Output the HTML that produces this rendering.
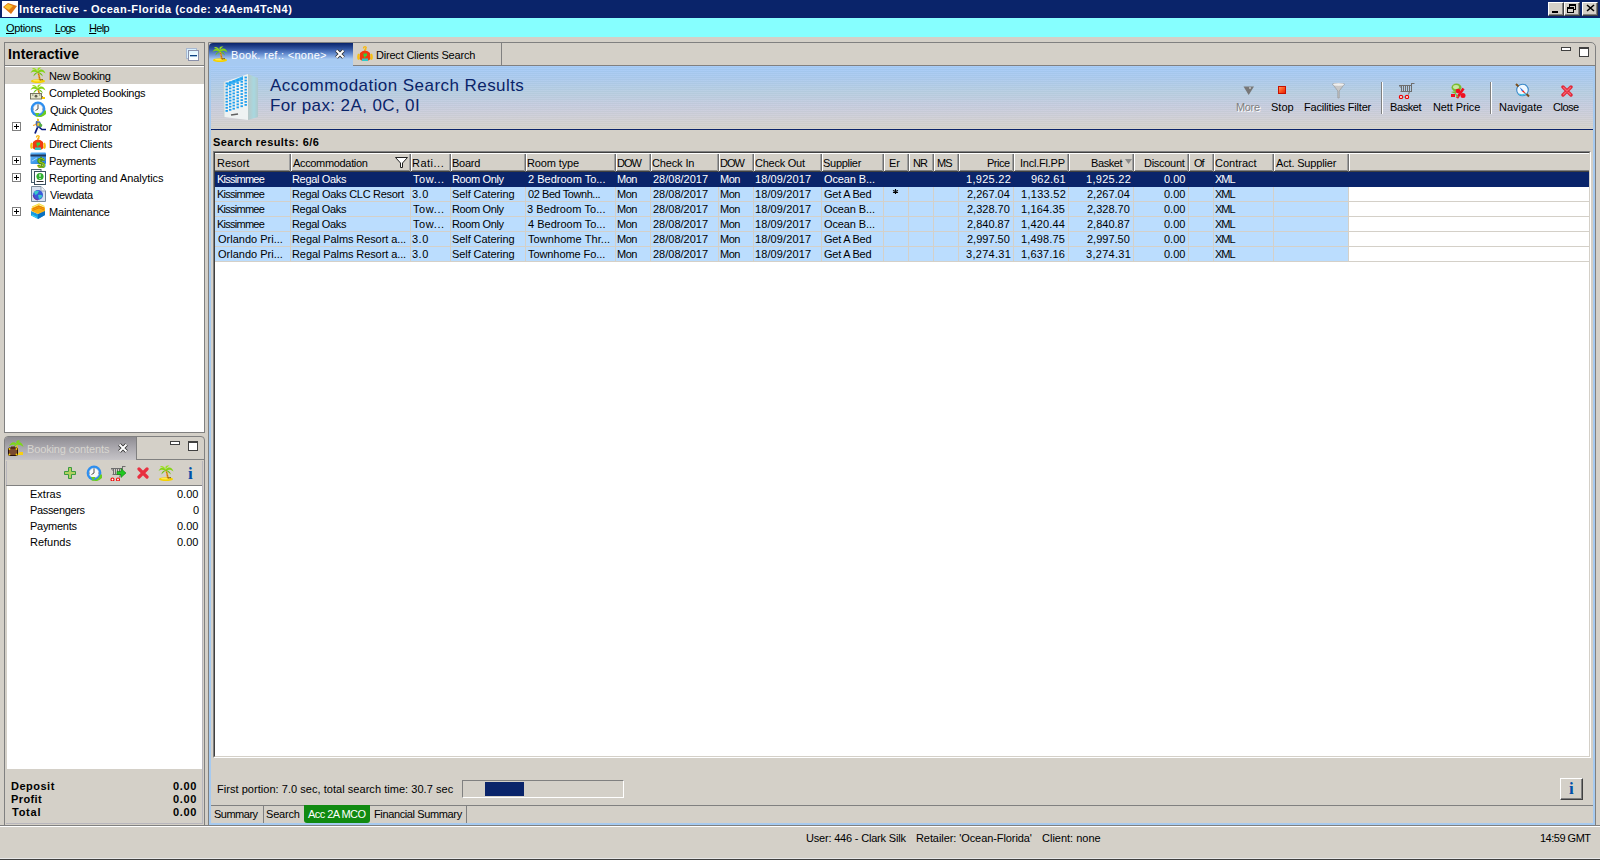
<!DOCTYPE html>
<html><head><meta charset="utf-8">
<style>
*{box-sizing:border-box;margin:0;padding:0}
html,body{width:1600px;height:860px;overflow:hidden}
body{background:#D4D0C8;font-family:"Liberation Sans",sans-serif;font-size:11px;color:#000;position:relative}
.a{position:absolute}
.t{position:absolute;white-space:nowrap;line-height:13px;letter-spacing:-0.35px}
.wb{position:absolute;top:2px;width:16px;height:14px;background:#D4D0C8;border-top:1px solid #fff;border-left:1px solid #fff;border-right:1px solid #404040;border-bottom:1px solid #404040;box-shadow:inset -1px -1px 0 #808080}
u{text-decoration:underline}
</style></head><body>
<div class="a" style="left:0;top:0;width:1600px;height:18px;background:#0A246A"></div>
<div class="a" style="left:2px;top:1px;width:16px;height:16px;background:#fff"></div>
<svg class="a" style="left:2px;top:1px;" width="16" height="16" viewBox="0 0 16 16"><path d="M1 6 L6 2 L15 5 L9 13Z" fill="#E07810"/><path d="M2 6 L6 3 L11 5 L7 9Z" fill="#F8C030"/></svg>
<div class="t" style="left:19.00px;top:3px;color:#fff;font-weight:bold;letter-spacing:0.511px">Interactive - Ocean-Florida (code: x4Aem4TcN4)</div>
<div class="wb" style="left:1548px"></div>
<div class="wb" style="left:1564px"></div>
<div class="wb" style="left:1582px"></div>
<div class="a" style="left:1552px;top:11px;width:6px;height:2px;background:#000"></div>
<div class="a" style="left:1569px;top:4px;width:7px;height:6px;border:1px solid #000;border-top-width:2px"></div>
<div class="a" style="left:1567px;top:7px;width:7px;height:6px;border:1px solid #000;border-top-width:2px;background:#D4D0C8"></div>
<svg class="a" style="left:1586px;top:4px;" width="9" height="8" viewBox="0 0 9 8"><path d="M1 1 L8 7 M8 1 L1 7" stroke="#000" stroke-width="1.6"/></svg>
<div class="a" style="left:0;top:18px;width:1600px;height:19px;background:#86FFFF"></div>
<div class="t" style="left:6.00px;top:22px;;letter-spacing:-0.333px"><u>O</u>ptions</div>
<div class="t" style="left:55.00px;top:22px;;letter-spacing:-1.000px"><u>L</u>ogs</div>
<div class="t" style="left:89.00px;top:22px;;letter-spacing:-0.667px"><u>H</u>elp</div>
<div class="a" style="left:4px;top:42px;width:201px;height:391px;border:1px solid #808080;background:#fff"></div>
<div class="a" style="left:5px;top:43px;width:199px;height:22px;background:#D4D0C8"></div>
<div class="a" style="left:5px;top:65px;width:199px;height:1px;background:#808080"></div>
<div class="t" style="left:8.00px;top:46px;font-size:14px;font-weight:bold;line-height:16px;letter-spacing:0.100px">Interactive</div>
<div class="a" style="left:186px;top:48px;width:11px;height:11px;border:1px solid #A8B8D0;background:#D8F0FF"></div>
<div class="a" style="left:188px;top:50px;width:11px;height:11px;border:1px solid #8A90AA;background:linear-gradient(#E0F6FF,#FFFFFF)"></div>
<div class="a" style="left:190px;top:55px;width:7px;height:1px;background:#0A4080;box-shadow:0 0.5px 0 #5080B0"></div>
<div class="a" style="left:5px;top:67px;width:199px;height:17px;background:#D4D0C8"></div>
<svg class="a" style="left:30px;top:67px;" width="16" height="16" viewBox="0 0 16 16"><ellipse cx="8" cy="14.2" rx="7" ry="1.9" fill="#F4D000"/><ellipse cx="7.5" cy="13.6" rx="4.5" ry="0.9" fill="#FFEA50"/><path d="M7 4.5 Q8.5 9 9 13.5 L11 13.5 Q10 8 8.3 4.5Z" fill="#E8A020"/><path d="M8.4 7.5l1 .5M8.8 10l1 .4M9.2 12l1 .4" stroke="#A05010" stroke-width="0.9"/><path d="M10 13 L13 12.6" stroke="#604000" stroke-width="0.8"/><path d="M7.8 4.5 C5 1.5 2 2.5 0.5 6 C2.5 4.5 4.5 4.2 7.8 5.5Z" fill="#84D414"/><path d="M7.8 4.5 C10.5 1.5 14 2 15.5 6.5 C13 4.5 11 4.5 7.8 5.5Z" fill="#84D414"/><path d="M7.8 4.5 C6.5 1 8.5 0 11.5 0.8 C9.5 1.5 9 2.5 7.8 5Z" fill="#9CE020"/><path d="M7.8 4.5 C5.5 0.5 3 0.5 2 2 C4 2 6 3 7.8 5Z" fill="#9CE020"/><path d="M7.5 5 C5 5.5 3.5 7.5 3.5 9.5 C5 7.5 6.5 6.5 7.8 5.5Z" fill="#6CC010"/><path d="M8 5 C10.5 5.5 12.5 7 12.8 9.5 C11 7.5 9.5 6.5 7.8 5.5Z" fill="#6CC010"/></svg>
<div class="t" style="left:49.00px;top:70px;;letter-spacing:-0.300px">New Booking</div>
<svg class="a" style="left:30px;top:84px;" width="16" height="16" viewBox="0 0 16 16"><path d="M10 13 h5 v2 h-5z" fill="#F4C800"/><path d="M7 4.5 Q8.5 9 9 13.5 L11 13.5 Q10 8 8.3 4.5Z" fill="#E8A020"/><path d="M8.4 7.5l1 .5M8.8 10l1 .4M9.2 12l1 .4" stroke="#A05010" stroke-width="0.9"/><path d="M10 13 L13 12.6" stroke="#604000" stroke-width="0.8"/><path d="M7.8 4.5 C5 1.5 2 2.5 0.5 6 C2.5 4.5 4.5 4.2 7.8 5.5Z" fill="#84D414"/><path d="M7.8 4.5 C10.5 1.5 14 2 15.5 6.5 C13 4.5 11 4.5 7.8 5.5Z" fill="#84D414"/><path d="M7.8 4.5 C6.5 1 8.5 0 11.5 0.8 C9.5 1.5 9 2.5 7.8 5Z" fill="#9CE020"/><path d="M7.8 4.5 C5.5 0.5 3 0.5 2 2 C4 2 6 3 7.8 5Z" fill="#9CE020"/><path d="M7.5 5 C5 5.5 3.5 7.5 3.5 9.5 C5 7.5 6.5 6.5 7.8 5.5Z" fill="#6CC010"/><path d="M8 5 C10.5 5.5 12.5 7 12.8 9.5 C11 7.5 9.5 6.5 7.8 5.5Z" fill="#6CC010"/><rect x="0.5" y="9.5" width="11" height="5.5" fill="#E6E6CC" stroke="#6A6A58" stroke-width="0.9"/><circle cx="6" cy="12.2" r="1.4" fill="#606050"/><path d="M2 11h1.5M9 11h1.5" stroke="#606050" stroke-width="0.8"/></svg>
<div class="t" style="left:49.00px;top:87px;;letter-spacing:-0.294px">Completed Bookings</div>
<svg class="a" style="left:30px;top:101px;" width="16" height="16" viewBox="0 0 16 16"><circle cx="8" cy="8" r="7.4" fill="#2C8EF0"/><circle cx="8" cy="8" r="4.9" fill="#FAFAFA" stroke="#9AB8D8" stroke-width="0.5"/><path d="M8 4V8L5.5 9.5" stroke="#404040" stroke-width="0.9" fill="none"/><circle cx="8" cy="3.3" r="0.5" fill="#666"/><circle cx="12.7" cy="8" r="0.5" fill="#666"/><circle cx="3.3" cy="8" r="0.5" fill="#666"/><path d="M5.5 15.5 Q12 15.5 14.5 9.5 L16 9.5 L16 13 Q12 17 6 16.5Z" fill="#6CCC20"/><path d="M5 12 L9.5 12 L7 16Z" fill="#6CCC20"/></svg>
<div class="t" style="left:50.00px;top:104px;;letter-spacing:-0.364px">Quick Quotes</div>
<svg class="a" style="left:30px;top:118px;" width="16" height="16" viewBox="0 0 16 16"><path d="M7 0.5 L9 1 L9 3 L7 3Z" fill="#F0C020"/><path d="M6 3 L10 3.5 L12 8 L10 10 L7 10 L5.5 6Z" fill="#4A6AA8"/><path d="M9 4 L12.5 7 L11 9.5 L9 8Z" fill="#58B040"/><path d="M7.5 4.5 L9.5 5 L9 8 L7 7.5Z" fill="#F0C030"/><path d="M3 7.5 L6 6.5" stroke="#F8A020" stroke-width="1.3"/><path d="M7.5 9.5 L6 13 L5 15.5" stroke="#0A1A80" stroke-width="1.8" fill="none"/><path d="M9.5 9.5 L12 11.5 L17 11.5" stroke="#0A1A80" stroke-width="1.6" fill="none"/></svg>
<div class="t" style="left:50.00px;top:121px;;letter-spacing:-0.250px">Administrator</div>
<div class="a" style="left:12px;top:122px;width:9px;height:9px;border:1px solid #808080;background:#fff"></div>
<div class="a" style="left:14px;top:126px;width:5px;height:1px;background:#000"></div>
<div class="a" style="left:16px;top:124px;width:1px;height:5px;background:#000"></div>
<svg class="a" style="left:30px;top:135px;" width="16" height="16" viewBox="0 0 16 16"><path d="M6.5 2.5 Q6.5 0.5 8.5 0.8 Q10 1.2 8.5 2.8 Q9.5 4 7 4" stroke="#F8B810" stroke-width="1.3" fill="none"/><path d="M3 7 Q5 4.5 8 4.5 Q11 4.5 13 7 L13.5 13 L11.5 14.5 L4.5 14.5 L2.5 13Z" fill="#F03A10"/><rect x="6.5" y="7.5" width="3.5" height="2.5" fill="#30D040"/><rect x="7" y="9.5" width="1.5" height="2" fill="#30D040"/><rect x="5" y="12.5" width="6" height="2.5" fill="#30C8C8"/><path d="M2 8 Q0.5 11 2 13.5" stroke="#F8C010" stroke-width="2.2" fill="none"/><path d="M14 8 Q15.5 11 14 13.5" stroke="#F8C010" stroke-width="2.2" fill="none"/></svg>
<div class="t" style="left:49.00px;top:138px;;letter-spacing:-0.154px">Direct Clients</div>
<svg class="a" style="left:30px;top:152px;" width="16" height="16" viewBox="0 0 16 16"><defs><linearGradient id="pg" x1="0" y1="0" x2="1" y2="1"><stop offset="0" stop-color="#68B8F8"/><stop offset="1" stop-color="#1C80E0"/></linearGradient></defs><rect x="0.5" y="0.5" width="15.5" height="11.5" rx="1" fill="url(#pg)"/><rect x="0.5" y="2.5" width="15.5" height="2" fill="#203860"/><path d="M2 9 L7 6" stroke="#B8E0FF" stroke-width="0.8"/><text x="11.5" y="15.5" font-family="Liberation Sans" font-weight="bold" font-size="14" fill="#9CD820" stroke="#4A8000" stroke-width="0.6" text-anchor="middle">$</text></svg>
<div class="t" style="left:49.00px;top:155px;;letter-spacing:-0.286px">Payments</div>
<div class="a" style="left:12px;top:156px;width:9px;height:9px;border:1px solid #808080;background:#fff"></div>
<div class="a" style="left:14px;top:160px;width:5px;height:1px;background:#000"></div>
<div class="a" style="left:16px;top:158px;width:1px;height:5px;background:#000"></div>
<svg class="a" style="left:30px;top:169px;" width="16" height="16" viewBox="0 0 16 16"><rect x="1.5" y="0.5" width="9.5" height="13" fill="#F4F8F8" stroke="#4A6070" stroke-width="1"/><rect x="4.5" y="2.5" width="11" height="13" fill="#fff" stroke="#3A5060" stroke-width="1"/><circle cx="10" cy="7.5" r="3.6" fill="#30B030"/><path d="M10 5.2v2.6M10 9v0.9" stroke="#fff" stroke-width="1.2"/><path d="M6.5 12.5h7" stroke="#303030" stroke-width="1"/></svg>
<div class="t" style="left:49.00px;top:172px;;letter-spacing:-0.045px">Reporting and Analytics</div>
<div class="a" style="left:12px;top:173px;width:9px;height:9px;border:1px solid #808080;background:#fff"></div>
<div class="a" style="left:14px;top:177px;width:5px;height:1px;background:#000"></div>
<div class="a" style="left:16px;top:175px;width:1px;height:5px;background:#000"></div>
<svg class="a" style="left:30px;top:186px;" width="16" height="16" viewBox="0 0 16 16"><path d="M1.5 0.5 H11 L15.5 5 V15.5 H1.5Z" fill="#D8E2F0" stroke="#7A8A9A" stroke-width="1"/><path d="M11 0.5 V5 H15.5" fill="#F0F4F8" stroke="#8A9AAA" stroke-width="0.8"/><circle cx="8" cy="9" r="5" fill="#3A58D8"/><path d="M4 6 Q6 4 9 5 Q8 8 5.5 9Z M8 9 Q11 8 12.5 10 Q11 13 9 13Z" fill="#38C8C8"/><path d="M3.2 9 Q4 13.5 8 14" stroke="#6A30A0" stroke-width="1.2" fill="none"/></svg>
<div class="t" style="left:50.00px;top:189px;;letter-spacing:-0.286px">Viewdata</div>
<svg class="a" style="left:30px;top:203px;" width="16" height="16" viewBox="0 0 16 16"><path d="M1 8 L8 11 L15 7.5 L15 12 L8 16 L1 12.5Z" fill="#1A9AE0"/><path d="M8 11 L15 7.5 L15 12 L8 16Z" fill="#0A70C0"/><path d="M2 12 L7 14.5" stroke="#40E0F0" stroke-width="1"/><path d="M1.5 5 L8.5 2 L15 4.5 L15 8 L8 11 L1.5 8Z" fill="#F8B010"/><path d="M2 4 L9 1 L14.5 3.5" stroke="#F8E040" stroke-width="1.2" fill="none"/><path d="M2.5 6 L9 3.2 L14 5.2 M2.5 7.5 L9 4.8 L14 6.8" stroke="#E07000" stroke-width="0.8" fill="none"/></svg>
<div class="t" style="left:49.00px;top:206px;;letter-spacing:-0.200px">Maintenance</div>
<div class="a" style="left:12px;top:207px;width:9px;height:9px;border:1px solid #808080;background:#fff"></div>
<div class="a" style="left:14px;top:211px;width:5px;height:1px;background:#000"></div>
<div class="a" style="left:16px;top:209px;width:1px;height:5px;background:#000"></div>
<div class="a" style="left:4px;top:436px;width:201px;height:390px;border:1px solid #808080;border-top-left-radius:4px;border-top-right-radius:4px;background:#D4D0C8"></div>
<div class="a" style="left:5px;top:437px;width:131px;height:23px;border-top-left-radius:3px;background:linear-gradient(#8E8C92,#A6A4AA 40%,#C6C4C8)"></div>
<div class="a" style="left:136px;top:437px;width:1px;height:23px;background:#808080"></div>
<div class="a" style="left:136px;top:459px;width:69px;height:1px;background:#808080"></div>
<svg class="a" style="left:8px;top:440px;" width="16" height="16" viewBox="0 0 16 16"><path d="M9 4 Q11 9 10.5 15 L9 15 Q9 9 8 4Z" fill="#F0C020"/><path d="M9 15h6v-3h-3z" fill="#F8D010"/><path d="M8.5 4 C6 1 3 2 1 6 C3 4.5 6 4.5 8.5 5Z M8.5 4 C11 1 14 2 15.5 7 C13 5 11 4.5 8.5 5Z M8.5 4 C7.5 0.5 10 -0.5 12.5 1 C10.5 1.5 10 2.5 8.5 5Z M8 4.5 C6 5.5 4.5 7 4.5 9 C6 7 7 6 8.5 5.2Z" fill="#7CD818"/><rect x="0.5" y="8" width="9" height="7.5" rx="1" fill="#7A4A30" stroke="#2A1008" stroke-width="1"/><rect x="3" y="6.5" width="4" height="2" fill="#5A2A18"/><circle cx="1.5" cy="9" r="0.9" fill="#F8D000"/><circle cx="8.5" cy="9" r="0.9" fill="#F8D000"/><circle cx="1.5" cy="14.5" r="0.9" fill="#F8D000"/><circle cx="8.5" cy="14.5" r="0.9" fill="#F8D000"/></svg>
<div class="t" style="left:27.00px;top:443px;color:#D8D6D0;letter-spacing:-0.133px">Booking contents</div>
<svg class="a" style="left:118px;top:443px;" width="10" height="10" viewBox="0 0 10 10"><path d="M1.5 1.5 L8.5 8.5 M8.5 1.5 L1.5 8.5" stroke="#303030" stroke-width="3.8"/><path d="M1.5 1.5 L8.5 8.5 M8.5 1.5 L1.5 8.5" stroke="#fff" stroke-width="2"/></svg>
<div class="a" style="left:170px;top:441px;width:10px;height:4px;border:1px solid #404040;background:#fff"></div>
<div class="a" style="left:188px;top:441px;width:10px;height:10px;border:1px solid #404040;border-top-width:2px;background:#fff"></div>
<div class="a" style="left:6px;top:461px;width:197px;height:25px;background:#D4D0C8;border-left:1px solid #B8B6BC"></div>
<div class="a" style="left:6px;top:485px;width:197px;height:1px;background:#808080"></div>
<svg class="a" style="left:64px;top:467px;" width="12" height="12" viewBox="0 0 12 12"><path d="M4.5 0.5h3v4h4v3h-4v4h-3v-4h-4v-3h4z" fill="#B0D060" stroke="#3A9A40" stroke-width="1"/></svg>
<svg class="a" style="left:86px;top:465px;" width="16" height="16" viewBox="0 0 16 16"><circle cx="8" cy="8" r="7.4" fill="#2C8EF0"/><circle cx="8" cy="8" r="4.9" fill="#FAFAFA" stroke="#9AB8D8" stroke-width="0.5"/><path d="M8 4V8L5.5 9.5" stroke="#404040" stroke-width="0.9" fill="none"/><circle cx="8" cy="3.3" r="0.5" fill="#666"/><circle cx="12.7" cy="8" r="0.5" fill="#666"/><circle cx="3.3" cy="8" r="0.5" fill="#666"/><path d="M5.5 15.5 Q12 15.5 14.5 9.5 L16 9.5 L16 13 Q12 17 6 16.5Z" fill="#6CCC20"/><path d="M5 12 L9.5 12 L7 16Z" fill="#6CCC20"/></svg>
<svg class="a" style="left:110px;top:465px;" width="16" height="16" viewBox="0 0 16 16"><path d="M1 3.5 H13 M2.5 9.5 H12 M12.5 1 V9.5 M12.5 1.5 H15.5 M3.5 3.5 V9.5 M5.5 3.5 V9.5 M7.5 3.5 V9.5 M9.5 3.5 V9.5 M11.5 3.5 V9.5 M1.5 3.5 L2.5 5.5 M10.5 9.5 L9.5 12.5" stroke="#6E6E6E" stroke-width="1" fill="none"/><circle cx="2.5" cy="14.5" r="1.5" fill="#fff" stroke="#F00000" stroke-width="1.1"/><circle cx="8" cy="14.5" r="1.5" fill="#fff" stroke="#F00000" stroke-width="1.1"/><path d="M7 6.5h4V3.5l5 4.5-5 4.5V9.5H7z" fill="#20C820" stroke="#108010" stroke-width="0.6"/></svg>
<svg class="a" style="left:137px;top:467px;" width="12" height="12" viewBox="0 0 12 12"><path d="M2 2 L10 10 M10 2 L2 10" stroke="#E83040" stroke-width="3.2" stroke-linecap="round"/></svg>
<svg class="a" style="left:158px;top:465px;" width="16" height="16" viewBox="0 0 16 16"><ellipse cx="8" cy="14.2" rx="7" ry="1.9" fill="#F4D000"/><ellipse cx="7.5" cy="13.6" rx="4.5" ry="0.9" fill="#FFEA50"/><path d="M7 4.5 Q8.5 9 9 13.5 L11 13.5 Q10 8 8.3 4.5Z" fill="#E8A020"/><path d="M8.4 7.5l1 .5M8.8 10l1 .4M9.2 12l1 .4" stroke="#A05010" stroke-width="0.9"/><path d="M10 13 L13 12.6" stroke="#604000" stroke-width="0.8"/><path d="M7.8 4.5 C5 1.5 2 2.5 0.5 6 C2.5 4.5 4.5 4.2 7.8 5.5Z" fill="#84D414"/><path d="M7.8 4.5 C10.5 1.5 14 2 15.5 6.5 C13 4.5 11 4.5 7.8 5.5Z" fill="#84D414"/><path d="M7.8 4.5 C6.5 1 8.5 0 11.5 0.8 C9.5 1.5 9 2.5 7.8 5Z" fill="#9CE020"/><path d="M7.8 4.5 C5.5 0.5 3 0.5 2 2 C4 2 6 3 7.8 5Z" fill="#9CE020"/><path d="M7.5 5 C5 5.5 3.5 7.5 3.5 9.5 C5 7.5 6.5 6.5 7.8 5.5Z" fill="#6CC010"/><path d="M8 5 C10.5 5.5 12.5 7 12.8 9.5 C11 7.5 9.5 6.5 7.8 5.5Z" fill="#6CC010"/></svg>
<div class="t" style="left:188px;top:465px;font-family:'Liberation Serif';font-weight:bold;font-size:17px;color:#0050A8;letter-spacing:0;line-height:18px">i</div>
<div class="a" style="left:7px;top:486px;width:195px;height:283px;background:#fff"></div>
<div class="t" style="left:30.00px;top:488px;;letter-spacing:0.000px">Extras</div>
<div class="t" style="left:177.00px;top:488px;;letter-spacing:0.000px">0.00</div>
<div class="t" style="left:30.00px;top:504px;;letter-spacing:-0.333px">Passengers</div>
<div class="t" style="left:193.00px;top:504px;;letter-spacing:0.000px">0</div>
<div class="t" style="left:30.00px;top:520px;;letter-spacing:-0.286px">Payments</div>
<div class="t" style="left:177.00px;top:520px;;letter-spacing:0.000px">0.00</div>
<div class="t" style="left:30.00px;top:536px;;letter-spacing:0.000px">Refunds</div>
<div class="t" style="left:177.00px;top:536px;;letter-spacing:0.000px">0.00</div>
<div class="t" style="left:11.00px;top:780px;font-weight:bold;letter-spacing:0.500px">Deposit</div>
<div class="t" style="left:173.00px;top:780px;font-weight:bold;letter-spacing:0.667px">0.00</div>
<div class="t" style="left:11.00px;top:793px;font-weight:bold;letter-spacing:0.400px">Profit</div>
<div class="t" style="left:173.00px;top:793px;font-weight:bold;letter-spacing:0.667px">0.00</div>
<div class="t" style="left:12.00px;top:806px;font-weight:bold;letter-spacing:0.750px">Total</div>
<div class="t" style="left:173.00px;top:806px;font-weight:bold;letter-spacing:0.667px">0.00</div>
<div class="a" style="left:6px;top:823px;width:197px;height:1px;background:#B8B6BC"></div>
<div class="a" style="left:202px;top:461px;width:1px;height:363px;background:#B8B6BC"></div>
<div class="a" style="left:208px;top:42px;width:1388px;height:784px;border:1px solid #808080;border-top-right-radius:5px"></div>
<div class="a" style="left:209px;top:65px;width:2px;height:760px;background:#A6CAF0"></div>
<div class="a" style="left:1593px;top:65px;width:2px;height:760px;background:#A6CAF0"></div>
<div class="a" style="left:209px;top:823px;width:1386px;height:2px;background:#A6CAF0"></div>
<div class="a" style="left:353px;top:43px;width:149px;height:22px;background:#D4D0C8;border-right:1px solid #808080"></div>
<div class="a" style="left:209px;top:65px;width:1386px;height:1px;background:#808080"></div>
<div class="a" style="left:209px;top:43px;width:144px;height:23px;border-top-left-radius:4px;background:linear-gradient(#0A246A 0px,#2A4C98 5px,#5A82C8 10px,#98BCEC 15px,#A6CAF2 16px,#A6CAF2 23px)"></div>
<svg class="a" style="left:212px;top:46px;" width="16" height="16" viewBox="0 0 16 16"><ellipse cx="8" cy="14.2" rx="7" ry="1.9" fill="#F4D000"/><ellipse cx="7.5" cy="13.6" rx="4.5" ry="0.9" fill="#FFEA50"/><path d="M7 4.5 Q8.5 9 9 13.5 L11 13.5 Q10 8 8.3 4.5Z" fill="#E8A020"/><path d="M8.4 7.5l1 .5M8.8 10l1 .4M9.2 12l1 .4" stroke="#A05010" stroke-width="0.9"/><path d="M10 13 L13 12.6" stroke="#604000" stroke-width="0.8"/><path d="M7.8 4.5 C5 1.5 2 2.5 0.5 6 C2.5 4.5 4.5 4.2 7.8 5.5Z" fill="#84D414"/><path d="M7.8 4.5 C10.5 1.5 14 2 15.5 6.5 C13 4.5 11 4.5 7.8 5.5Z" fill="#84D414"/><path d="M7.8 4.5 C6.5 1 8.5 0 11.5 0.8 C9.5 1.5 9 2.5 7.8 5Z" fill="#9CE020"/><path d="M7.8 4.5 C5.5 0.5 3 0.5 2 2 C4 2 6 3 7.8 5Z" fill="#9CE020"/><path d="M7.5 5 C5 5.5 3.5 7.5 3.5 9.5 C5 7.5 6.5 6.5 7.8 5.5Z" fill="#6CC010"/><path d="M8 5 C10.5 5.5 12.5 7 12.8 9.5 C11 7.5 9.5 6.5 7.8 5.5Z" fill="#6CC010"/></svg>
<div class="t" style="left:231.00px;top:49px;color:#fff;letter-spacing:0.294px">Book. ref.: &lt;none&gt;</div>
<svg class="a" style="left:335px;top:49px;" width="10" height="10" viewBox="0 0 10 10"><path d="M1.5 1.5 L8.5 8.5 M8.5 1.5 L1.5 8.5" stroke="#303030" stroke-width="3.8"/><path d="M1.5 1.5 L8.5 8.5 M8.5 1.5 L1.5 8.5" stroke="#fff" stroke-width="2"/></svg>
<svg class="a" style="left:357px;top:46px;" width="16" height="16" viewBox="0 0 16 16"><path d="M6.5 2.5 Q6.5 0.5 8.5 0.8 Q10 1.2 8.5 2.8 Q9.5 4 7 4" stroke="#F8B810" stroke-width="1.3" fill="none"/><path d="M3 7 Q5 4.5 8 4.5 Q11 4.5 13 7 L13.5 13 L11.5 14.5 L4.5 14.5 L2.5 13Z" fill="#F03A10"/><rect x="6.5" y="7.5" width="3.5" height="2.5" fill="#30D040"/><rect x="7" y="9.5" width="1.5" height="2" fill="#30D040"/><rect x="5" y="12.5" width="6" height="2.5" fill="#30C8C8"/><path d="M2 8 Q0.5 11 2 13.5" stroke="#F8C010" stroke-width="2.2" fill="none"/><path d="M14 8 Q15.5 11 14 13.5" stroke="#F8C010" stroke-width="2.2" fill="none"/></svg>
<div class="t" style="left:376.00px;top:49px;;letter-spacing:-0.200px">Direct Clients Search</div>
<div class="a" style="left:1561px;top:47px;width:10px;height:4px;border:1px solid #404040;background:#fff"></div>
<div class="a" style="left:1579px;top:47px;width:10px;height:10px;border:1px solid #404040;border-top-width:2px;background:#fff"></div>
<div class="a" style="left:211px;top:66px;width:1382px;height:63px;background:repeating-linear-gradient(rgba(255,255,255,0.05) 0 1px,rgba(60,110,60,0.035) 1px 2px),linear-gradient(#A4CAF8,#ACCAEE 20%,#B8CEE2 42%,#C6CCE0 62%,#CFCFD8 80%,#D6D3CC)"></div>
<div class="a" style="left:211px;top:129px;width:1382px;height:1px;background:#0A246A"></div>
<svg class="a" style="left:222px;top:72px;" width="38" height="50" viewBox="0 0 38 50"><defs><linearGradient id="rf" x1="0" x2="1"><stop offset="0" stop-color="#B8C8C8"/><stop offset="0.6" stop-color="#A8D8E0"/><stop offset="1" stop-color="#B0C8CC"/></linearGradient></defs><path d="M2 10 L26 2 L26 48 L2 45Z" fill="#EEF2F2"/><path d="M26 2 L36 6 L36 45 L26 48Z" fill="url(#rf)"/><path d="M5 11 L21 4 L21 8 L5 14Z" fill="#3CB4F6"/><rect x="3.5" y="10.5" width="2.4" height="1.8" fill="#1E9EEE"/><rect x="3.5" y="13.6" width="2.4" height="1.8" fill="#1E9EEE"/><rect x="3.5" y="16.6" width="2.4" height="1.8" fill="#1E9EEE"/><rect x="3.5" y="19.7" width="2.4" height="1.8" fill="#1E9EEE"/><rect x="3.5" y="22.7" width="2.4" height="1.8" fill="#1E9EEE"/><rect x="3.5" y="25.8" width="2.4" height="1.8" fill="#1E9EEE"/><rect x="3.5" y="28.8" width="2.4" height="1.8" fill="#1E9EEE"/><rect x="3.5" y="31.9" width="2.4" height="1.8" fill="#1E9EEE"/><rect x="3.5" y="34.9" width="2.4" height="1.8" fill="#1E9EEE"/><rect x="3.5" y="38.0" width="2.4" height="1.8" fill="#1E9EEE"/><rect x="7.0" y="9.4" width="2.4" height="1.8" fill="#1E9EEE"/><rect x="7.0" y="12.5" width="2.4" height="1.8" fill="#1E9EEE"/><rect x="7.0" y="15.5" width="2.4" height="1.8" fill="#1E9EEE"/><rect x="7.0" y="18.6" width="2.4" height="1.8" fill="#1E9EEE"/><rect x="7.0" y="21.6" width="2.4" height="1.8" fill="#1E9EEE"/><rect x="7.0" y="24.7" width="2.4" height="1.8" fill="#1E9EEE"/><rect x="7.0" y="27.7" width="2.4" height="1.8" fill="#1E9EEE"/><rect x="7.0" y="30.8" width="2.4" height="1.8" fill="#1E9EEE"/><rect x="7.0" y="33.8" width="2.4" height="1.8" fill="#1E9EEE"/><rect x="7.0" y="36.9" width="2.4" height="1.8" fill="#1E9EEE"/><rect x="10.5" y="8.3" width="2.4" height="1.8" fill="#1E9EEE"/><rect x="10.5" y="11.4" width="2.4" height="1.8" fill="#1E9EEE"/><rect x="10.5" y="14.4" width="2.4" height="1.8" fill="#1E9EEE"/><rect x="10.5" y="17.5" width="2.4" height="1.8" fill="#1E9EEE"/><rect x="10.5" y="20.5" width="2.4" height="1.8" fill="#1E9EEE"/><rect x="10.5" y="23.6" width="2.4" height="1.8" fill="#1E9EEE"/><rect x="10.5" y="26.6" width="2.4" height="1.8" fill="#1E9EEE"/><rect x="10.5" y="29.7" width="2.4" height="1.8" fill="#1E9EEE"/><rect x="10.5" y="32.7" width="2.4" height="1.8" fill="#1E9EEE"/><rect x="10.5" y="35.8" width="2.4" height="1.8" fill="#1E9EEE"/><rect x="14.5" y="7.1" width="2.4" height="1.8" fill="#1E9EEE"/><rect x="14.5" y="10.1" width="2.4" height="1.8" fill="#1E9EEE"/><rect x="14.5" y="13.2" width="2.4" height="1.8" fill="#1E9EEE"/><rect x="14.5" y="16.2" width="2.4" height="1.8" fill="#1E9EEE"/><rect x="14.5" y="19.3" width="2.4" height="1.8" fill="#1E9EEE"/><rect x="14.5" y="22.3" width="2.4" height="1.8" fill="#1E9EEE"/><rect x="14.5" y="25.4" width="2.4" height="1.8" fill="#1E9EEE"/><rect x="14.5" y="28.4" width="2.4" height="1.8" fill="#1E9EEE"/><rect x="14.5" y="31.5" width="2.4" height="1.8" fill="#1E9EEE"/><rect x="14.5" y="34.5" width="2.4" height="1.8" fill="#1E9EEE"/><rect x="18.5" y="5.8" width="2.4" height="1.8" fill="#1E9EEE"/><rect x="18.5" y="8.9" width="2.4" height="1.8" fill="#1E9EEE"/><rect x="18.5" y="11.9" width="2.4" height="1.8" fill="#1E9EEE"/><rect x="18.5" y="15.0" width="2.4" height="1.8" fill="#1E9EEE"/><rect x="18.5" y="18.0" width="2.4" height="1.8" fill="#1E9EEE"/><rect x="18.5" y="21.1" width="2.4" height="1.8" fill="#1E9EEE"/><rect x="18.5" y="24.1" width="2.4" height="1.8" fill="#1E9EEE"/><rect x="18.5" y="27.2" width="2.4" height="1.8" fill="#1E9EEE"/><rect x="18.5" y="30.2" width="2.4" height="1.8" fill="#1E9EEE"/><rect x="18.5" y="33.3" width="2.4" height="1.8" fill="#1E9EEE"/><rect x="22.5" y="4.6" width="2.4" height="1.8" fill="#1E9EEE"/><rect x="22.5" y="7.6" width="2.4" height="1.8" fill="#1E9EEE"/><rect x="22.5" y="10.7" width="2.4" height="1.8" fill="#1E9EEE"/><rect x="22.5" y="13.7" width="2.4" height="1.8" fill="#1E9EEE"/><rect x="22.5" y="16.8" width="2.4" height="1.8" fill="#1E9EEE"/><rect x="22.5" y="19.8" width="2.4" height="1.8" fill="#1E9EEE"/><rect x="22.5" y="22.9" width="2.4" height="1.8" fill="#1E9EEE"/><rect x="22.5" y="25.9" width="2.4" height="1.8" fill="#1E9EEE"/><rect x="22.5" y="29.0" width="2.4" height="1.8" fill="#1E9EEE"/><rect x="22.5" y="32.0" width="2.4" height="1.8" fill="#1E9EEE"/><path d="M2 10 L2 45" stroke="#C8D0D0" stroke-width="1"/><path d="M9 43 L16 42" stroke="#606060" stroke-width="1.6"/></svg>
<div class="t" style="left:270.00px;top:76px;font-size:17px;line-height:20px;color:#0A246A;letter-spacing:0.444px">Accommodation Search Results</div>
<div class="t" style="left:270.00px;top:96px;font-size:17px;line-height:20px;color:#0A246A;letter-spacing:0.389px">For pax: 2A, 0C, 0I</div>
<div class="t" style="left:1236.00px;top:101px;color:#808080;text-shadow:1px 1px 0 #fff;letter-spacing:-0.333px">More</div>
<svg class="a" style="left:1243px;top:86px;" width="12" height="10" viewBox="0 0 12 10"><path d="M0.5 0.5 H11 L5.7 9Z" fill="#777"/><circle cx="7" cy="2" r="0.8" fill="#fff"/></svg>
<div class="t" style="left:1271.00px;top:101px;color:#000;letter-spacing:0.000px">Stop</div>
<svg class="a" style="left:1278px;top:86px;" width="8" height="8" viewBox="0 0 8 8"><defs><linearGradient id="sg" x1="0" y1="0" x2="1" y2="1"><stop offset="0" stop-color="#FFA060"/><stop offset="0.6" stop-color="#F84818"/><stop offset="1" stop-color="#E02008"/></linearGradient></defs><rect x="0.5" y="0.5" width="7" height="7" fill="url(#sg)" stroke="#C81000" stroke-width="1"/></svg>
<div class="t" style="left:1304.00px;top:101px;color:#000;letter-spacing:-0.188px">Facilities Filter</div>
<svg class="a" style="left:1332px;top:83px;" width="13" height="16" viewBox="0 0 13 16"><path d="M0.5 1 Q6.5 -1 12.5 1 L7.2 8 V15 H5.8 V8Z" fill="#C8C8C8" stroke="#909090" stroke-width="0.6"/><ellipse cx="6.5" cy="1.5" rx="5.5" ry="1.2" fill="#F0F0F0"/></svg>
<div class="a" style="left:1381px;top:82px;width:2px;height:32px;background:#808080;border-right:1px solid #fff"></div>
<div class="t" style="left:1390.00px;top:101px;color:#000;letter-spacing:-0.400px">Basket</div>
<svg class="a" style="left:1398px;top:82px;" width="17" height="17" viewBox="0 0 17 17"><path d="M1 3.5 H14 M2.5 9.5 H14 M13.5 1 V9.5 M13.5 1.5 H16.5 M3.5 3.5 V9.5 M5.5 3.5 V9.5 M7.5 3.5 V9.5 M9.5 3.5 V9.5 M11.5 3.5 V9.5 M1.5 3.5 L2.5 5.5 M11.5 9.5 L10.5 12.5" stroke="#6E6E6E" stroke-width="1" fill="none"/><circle cx="3" cy="15" r="1.6" fill="#fff" stroke="#F00000" stroke-width="1.2"/><circle cx="9" cy="15" r="1.6" fill="#fff" stroke="#F00000" stroke-width="1.2"/><path d="M4.6 15h2.8" stroke="#5a8a8a" stroke-width="0.8"/></svg>
<div class="t" style="left:1433.00px;top:101px;color:#000;letter-spacing:-0.111px">Nett Price</div>
<svg class="a" style="left:1450px;top:82px;" width="17" height="17" viewBox="0 0 17 17"><ellipse cx="6.5" cy="5.5" rx="5" ry="4" fill="#7CBC30"/><ellipse cx="6" cy="5" rx="3" ry="2" fill="#C8E8A0"/><path d="M1 10 L6 9 L6 12Z" fill="#7CBC30"/><rect x="1" y="12" width="4" height="3" fill="#F01020"/><circle cx="8" cy="9" r="2.3" fill="#F01020"/><circle cx="13" cy="13.5" r="2.5" fill="#F01020"/><path d="M13.5 6.5 L7 16" stroke="#F01020" stroke-width="2.6"/><path d="M5.5 12 L8 15" stroke="#7CBC30" stroke-width="1.2"/></svg>
<div class="a" style="left:1490px;top:82px;width:2px;height:32px;background:#808080;border-right:1px solid #fff"></div>
<div class="t" style="left:1499.00px;top:101px;color:#000;letter-spacing:0.000px">Navigate</div>
<svg class="a" style="left:1513px;top:82px;" width="17" height="17" viewBox="0 0 17 17"><circle cx="9.5" cy="8" r="5.8" fill="#F0F8FF" stroke="#3A88C8" stroke-width="1.1"/><path d="M13 11 A5.8 5.8 0 0 1 6 12" stroke="#40C8E8" stroke-width="1.2" fill="none"/><path d="M6.5 5 L10.5 8.5 L9 9.5Z" fill="#2A70D8"/><path d="M10.5 8.5 L13 12 L9 9.5Z" fill="#F02010"/><path d="M3 2 L5.5 4.5 M13.5 12 L16 14.5" stroke="#7A5020" stroke-width="2"/></svg>
<div class="t" style="left:1553.00px;top:101px;color:#000;letter-spacing:-0.500px">Close</div>
<svg class="a" style="left:1561px;top:85px;" width="12" height="12" viewBox="0 0 12 12"><path d="M2 2 L10 10 M10 2 L2 10" stroke="#E02838" stroke-width="3.4" stroke-linecap="round"/><path d="M2.5 2.5 L9.5 9.5 M9.5 2.5 L2.5 9.5" stroke="#F86070" stroke-width="1.2" stroke-linecap="round"/></svg>
<div class="t" style="left:213.00px;top:136px;font-weight:bold;letter-spacing:0.444px">Search results: 6/6</div>
<div class="a" style="left:213px;top:151px;width:1378px;height:607px;border-top:1px solid #808080;border-left:1px solid #808080;border-right:1px solid #fff;border-bottom:1px solid #fff"></div>
<div class="a" style="left:214px;top:152px;width:1376px;height:605px;border-top:1px solid #404040;border-left:1px solid #404040;border-right:1px solid #D4D0C8;border-bottom:1px solid #D4D0C8;background:#fff"></div>
<div class="a" style="left:215px;top:153px;width:1374px;height:19px;background:#D4D0C8;border-top:1px solid #fff;border-bottom:1px solid #404040;box-shadow:inset 0 -1px 0 #808080"></div>
<div class="a" style="left:289px;top:154px;width:1px;height:17px;background:#A0A0A0"></div>
<div class="a" style="left:290px;top:154px;width:1px;height:18px;background:#707070"></div>
<div class="a" style="left:291px;top:154px;width:1px;height:17px;background:#fff"></div>
<div class="t" style="left:217.00px;top:157px;;letter-spacing:0.000px">Resort</div>
<div class="a" style="left:409px;top:154px;width:1px;height:17px;background:#A0A0A0"></div>
<div class="a" style="left:410px;top:154px;width:1px;height:18px;background:#707070"></div>
<div class="a" style="left:411px;top:154px;width:1px;height:17px;background:#fff"></div>
<div class="t" style="left:293.00px;top:157px;;letter-spacing:-0.333px">Accommodation</div>
<div class="a" style="left:449px;top:154px;width:1px;height:17px;background:#A0A0A0"></div>
<div class="a" style="left:450px;top:154px;width:1px;height:18px;background:#707070"></div>
<div class="a" style="left:451px;top:154px;width:1px;height:17px;background:#fff"></div>
<div class="t" style="left:412.00px;top:157px;;letter-spacing:0.500px">Rati...</div>
<div class="a" style="left:524px;top:154px;width:1px;height:17px;background:#A0A0A0"></div>
<div class="a" style="left:525px;top:154px;width:1px;height:18px;background:#707070"></div>
<div class="a" style="left:526px;top:154px;width:1px;height:17px;background:#fff"></div>
<div class="t" style="left:452.00px;top:157px;;letter-spacing:-0.250px">Board</div>
<div class="a" style="left:614px;top:154px;width:1px;height:17px;background:#A0A0A0"></div>
<div class="a" style="left:615px;top:154px;width:1px;height:18px;background:#707070"></div>
<div class="a" style="left:616px;top:154px;width:1px;height:17px;background:#fff"></div>
<div class="t" style="left:527.00px;top:157px;;letter-spacing:-0.125px">Room type</div>
<div class="a" style="left:649px;top:154px;width:1px;height:17px;background:#A0A0A0"></div>
<div class="a" style="left:650px;top:154px;width:1px;height:18px;background:#707070"></div>
<div class="a" style="left:651px;top:154px;width:1px;height:17px;background:#fff"></div>
<div class="t" style="left:617.00px;top:157px;;letter-spacing:-1.000px">DOW</div>
<div class="a" style="left:717px;top:154px;width:1px;height:17px;background:#A0A0A0"></div>
<div class="a" style="left:718px;top:154px;width:1px;height:18px;background:#707070"></div>
<div class="a" style="left:719px;top:154px;width:1px;height:17px;background:#fff"></div>
<div class="t" style="left:652.00px;top:157px;;letter-spacing:-0.143px">Check In</div>
<div class="a" style="left:752px;top:154px;width:1px;height:17px;background:#A0A0A0"></div>
<div class="a" style="left:753px;top:154px;width:1px;height:18px;background:#707070"></div>
<div class="a" style="left:754px;top:154px;width:1px;height:17px;background:#fff"></div>
<div class="t" style="left:720.00px;top:157px;;letter-spacing:-1.000px">DOW</div>
<div class="a" style="left:820px;top:154px;width:1px;height:17px;background:#A0A0A0"></div>
<div class="a" style="left:821px;top:154px;width:1px;height:18px;background:#707070"></div>
<div class="a" style="left:822px;top:154px;width:1px;height:17px;background:#fff"></div>
<div class="t" style="left:755.00px;top:157px;;letter-spacing:-0.250px">Check Out</div>
<div class="a" style="left:882px;top:154px;width:1px;height:17px;background:#A0A0A0"></div>
<div class="a" style="left:883px;top:154px;width:1px;height:18px;background:#707070"></div>
<div class="a" style="left:884px;top:154px;width:1px;height:17px;background:#fff"></div>
<div class="t" style="left:823.00px;top:157px;;letter-spacing:-0.286px">Supplier</div>
<div class="a" style="left:907px;top:154px;width:1px;height:17px;background:#A0A0A0"></div>
<div class="a" style="left:908px;top:154px;width:1px;height:18px;background:#707070"></div>
<div class="a" style="left:909px;top:154px;width:1px;height:17px;background:#fff"></div>
<div class="t" style="left:889.00px;top:157px;;letter-spacing:0.000px">Er</div>
<div class="a" style="left:932px;top:154px;width:1px;height:17px;background:#A0A0A0"></div>
<div class="a" style="left:933px;top:154px;width:1px;height:18px;background:#707070"></div>
<div class="a" style="left:934px;top:154px;width:1px;height:17px;background:#fff"></div>
<div class="t" style="left:913.00px;top:157px;;letter-spacing:-1.000px">NR</div>
<div class="a" style="left:957px;top:154px;width:1px;height:17px;background:#A0A0A0"></div>
<div class="a" style="left:958px;top:154px;width:1px;height:18px;background:#707070"></div>
<div class="a" style="left:959px;top:154px;width:1px;height:17px;background:#fff"></div>
<div class="t" style="left:937.00px;top:157px;;letter-spacing:-1.000px">MS</div>
<div class="a" style="left:1012px;top:154px;width:1px;height:17px;background:#A0A0A0"></div>
<div class="a" style="left:1013px;top:154px;width:1px;height:18px;background:#707070"></div>
<div class="a" style="left:1014px;top:154px;width:1px;height:17px;background:#fff"></div>
<div class="t" style="left:987.00px;top:157px;;letter-spacing:-0.500px">Price</div>
<div class="a" style="left:1067px;top:154px;width:1px;height:17px;background:#A0A0A0"></div>
<div class="a" style="left:1068px;top:154px;width:1px;height:18px;background:#707070"></div>
<div class="a" style="left:1069px;top:154px;width:1px;height:17px;background:#fff"></div>
<div class="t" style="left:1020.00px;top:157px;;letter-spacing:-0.222px">Incl.Fl.PP</div>
<div class="a" style="left:1132px;top:154px;width:1px;height:17px;background:#A0A0A0"></div>
<div class="a" style="left:1133px;top:154px;width:1px;height:18px;background:#707070"></div>
<div class="a" style="left:1134px;top:154px;width:1px;height:17px;background:#fff"></div>
<div class="t" style="left:1091.00px;top:157px;;letter-spacing:-0.400px">Basket</div>
<div class="a" style="left:1187px;top:154px;width:1px;height:17px;background:#A0A0A0"></div>
<div class="a" style="left:1188px;top:154px;width:1px;height:18px;background:#707070"></div>
<div class="a" style="left:1189px;top:154px;width:1px;height:17px;background:#fff"></div>
<div class="t" style="left:1144.00px;top:157px;;letter-spacing:-0.286px">Discount</div>
<div class="a" style="left:1212px;top:154px;width:1px;height:17px;background:#A0A0A0"></div>
<div class="a" style="left:1213px;top:154px;width:1px;height:18px;background:#707070"></div>
<div class="a" style="left:1214px;top:154px;width:1px;height:17px;background:#fff"></div>
<div class="t" style="left:1194.00px;top:157px;;letter-spacing:-1.000px">Of</div>
<div class="a" style="left:1272px;top:154px;width:1px;height:17px;background:#A0A0A0"></div>
<div class="a" style="left:1273px;top:154px;width:1px;height:18px;background:#707070"></div>
<div class="a" style="left:1274px;top:154px;width:1px;height:17px;background:#fff"></div>
<div class="t" style="left:1215.00px;top:157px;;letter-spacing:0.000px">Contract</div>
<div class="a" style="left:1347px;top:154px;width:1px;height:17px;background:#A0A0A0"></div>
<div class="a" style="left:1348px;top:154px;width:1px;height:18px;background:#707070"></div>
<div class="a" style="left:1349px;top:154px;width:1px;height:17px;background:#fff"></div>
<div class="t" style="left:1276.00px;top:157px;;letter-spacing:-0.167px">Act. Supplier</div>
<svg class="a" style="left:395px;top:157px;" width="13" height="11" viewBox="0 0 13 11"><path d="M0.5 0.5 H12.5 L7.5 6 V10.5 H5.5 V6Z" fill="#fff" stroke="#202020" stroke-width="1"/></svg>
<svg class="a" style="left:1125px;top:159px;" width="7" height="5" viewBox="0 0 7 5"><path d="M0 0 H7 L3.5 5Z" fill="#8A8A8A"/></svg>
<div class="a" style="left:215px;top:172px;width:1374px;height:15px;background:#0A246A"></div>
<div class="t" style="left:217.00px;top:173px;color:#fff;letter-spacing:-0.750px">Kissimmee</div>
<div class="t" style="left:292.00px;top:173px;color:#fff;letter-spacing:-0.333px">Regal Oaks</div>
<div class="t" style="left:413.00px;top:173px;color:#fff;letter-spacing:0.600px">Tow...</div>
<div class="t" style="left:452.00px;top:173px;color:#fff;letter-spacing:-0.375px">Room Only</div>
<div class="t" style="left:528.00px;top:173px;color:#fff;letter-spacing:0.000px">2 Bedroom To...</div>
<div class="t" style="left:617.00px;top:173px;color:#fff;letter-spacing:-0.500px">Mon</div>
<div class="t" style="left:653.00px;top:173px;color:#fff;letter-spacing:0.000px">28/08/2017</div>
<div class="t" style="left:720.00px;top:173px;color:#fff;letter-spacing:-0.500px">Mon</div>
<div class="t" style="left:755.00px;top:173px;color:#fff;letter-spacing:0.111px">18/09/2017</div>
<div class="t" style="left:824.00px;top:173px;color:#fff;letter-spacing:-0.111px">Ocean B...</div>
<div class="t" style="left:966.00px;top:173px;color:#fff;letter-spacing:0.286px">1,925.22</div>
<div class="t" style="left:1031.00px;top:173px;color:#fff;letter-spacing:0.200px">962.61</div>
<div class="t" style="left:1086.00px;top:173px;color:#fff;letter-spacing:0.286px">1,925.22</div>
<div class="t" style="left:1164.00px;top:173px;color:#fff;letter-spacing:0.000px">0.00</div>
<div class="t" style="left:1215.00px;top:173px;color:#fff;letter-spacing:-1.000px">XML</div>
<div class="a" style="left:215px;top:187px;width:1133px;height:14px;background:#BBDDFE"></div>
<div class="a" style="left:215px;top:201px;width:1374px;height:1px;background:#D4D0C8"></div>
<div class="a" style="left:290px;top:187px;width:1px;height:15px;background:#D4D0C8"></div>
<div class="a" style="left:410px;top:187px;width:1px;height:15px;background:#D4D0C8"></div>
<div class="a" style="left:450px;top:187px;width:1px;height:15px;background:#D4D0C8"></div>
<div class="a" style="left:525px;top:187px;width:1px;height:15px;background:#D4D0C8"></div>
<div class="a" style="left:615px;top:187px;width:1px;height:15px;background:#D4D0C8"></div>
<div class="a" style="left:650px;top:187px;width:1px;height:15px;background:#D4D0C8"></div>
<div class="a" style="left:718px;top:187px;width:1px;height:15px;background:#D4D0C8"></div>
<div class="a" style="left:753px;top:187px;width:1px;height:15px;background:#D4D0C8"></div>
<div class="a" style="left:821px;top:187px;width:1px;height:15px;background:#D4D0C8"></div>
<div class="a" style="left:883px;top:187px;width:1px;height:15px;background:#D4D0C8"></div>
<div class="a" style="left:908px;top:187px;width:1px;height:15px;background:#D4D0C8"></div>
<div class="a" style="left:933px;top:187px;width:1px;height:15px;background:#D4D0C8"></div>
<div class="a" style="left:958px;top:187px;width:1px;height:15px;background:#D4D0C8"></div>
<div class="a" style="left:1013px;top:187px;width:1px;height:15px;background:#D4D0C8"></div>
<div class="a" style="left:1068px;top:187px;width:1px;height:15px;background:#D4D0C8"></div>
<div class="a" style="left:1133px;top:187px;width:1px;height:15px;background:#D4D0C8"></div>
<div class="a" style="left:1188px;top:187px;width:1px;height:15px;background:#D4D0C8"></div>
<div class="a" style="left:1213px;top:187px;width:1px;height:15px;background:#D4D0C8"></div>
<div class="a" style="left:1273px;top:187px;width:1px;height:15px;background:#D4D0C8"></div>
<div class="a" style="left:1348px;top:187px;width:1px;height:15px;background:#D4D0C8"></div>
<div class="t" style="left:217.00px;top:188px;color:#000;letter-spacing:-0.750px">Kissimmee</div>
<div class="t" style="left:292.00px;top:188px;color:#000;letter-spacing:-0.300px">Regal Oaks CLC Resort</div>
<div class="t" style="left:412.00px;top:188px;color:#000;letter-spacing:0.500px">3.0</div>
<div class="t" style="left:452.00px;top:188px;color:#000;letter-spacing:-0.083px">Self Catering</div>
<div class="t" style="left:528.00px;top:188px;color:#000;letter-spacing:-0.429px">02 Bed Townh...</div>
<div class="t" style="left:617.00px;top:188px;color:#000;letter-spacing:-0.500px">Mon</div>
<div class="t" style="left:653.00px;top:188px;color:#000;letter-spacing:0.000px">28/08/2017</div>
<div class="t" style="left:720.00px;top:188px;color:#000;letter-spacing:-0.500px">Mon</div>
<div class="t" style="left:755.00px;top:188px;color:#000;letter-spacing:0.111px">18/09/2017</div>
<div class="t" style="left:824.00px;top:188px;color:#000;letter-spacing:-0.250px">Get A Bed</div>
<svg class="a" style="left:892px;top:188px;" width="7" height="7" viewBox="0 0 7 7"><path d="M3.5 1V6 M1 2.5 L6 4.5 M1 4.5 L6 2.5" stroke="#000" stroke-width="1.1" fill="none"/></svg>
<div class="t" style="left:967.00px;top:188px;color:#000;letter-spacing:0.000px">2,267.04</div>
<div class="t" style="left:1021.00px;top:188px;color:#000;letter-spacing:0.286px">1,133.52</div>
<div class="t" style="left:1087.00px;top:188px;color:#000;letter-spacing:0.000px">2,267.04</div>
<div class="t" style="left:1164.00px;top:188px;color:#000;letter-spacing:0.000px">0.00</div>
<div class="t" style="left:1215.00px;top:188px;color:#000;letter-spacing:-1.000px">XML</div>
<div class="a" style="left:215px;top:202px;width:1133px;height:14px;background:#BBDDFE"></div>
<div class="a" style="left:215px;top:216px;width:1374px;height:1px;background:#D4D0C8"></div>
<div class="a" style="left:290px;top:202px;width:1px;height:15px;background:#D4D0C8"></div>
<div class="a" style="left:410px;top:202px;width:1px;height:15px;background:#D4D0C8"></div>
<div class="a" style="left:450px;top:202px;width:1px;height:15px;background:#D4D0C8"></div>
<div class="a" style="left:525px;top:202px;width:1px;height:15px;background:#D4D0C8"></div>
<div class="a" style="left:615px;top:202px;width:1px;height:15px;background:#D4D0C8"></div>
<div class="a" style="left:650px;top:202px;width:1px;height:15px;background:#D4D0C8"></div>
<div class="a" style="left:718px;top:202px;width:1px;height:15px;background:#D4D0C8"></div>
<div class="a" style="left:753px;top:202px;width:1px;height:15px;background:#D4D0C8"></div>
<div class="a" style="left:821px;top:202px;width:1px;height:15px;background:#D4D0C8"></div>
<div class="a" style="left:883px;top:202px;width:1px;height:15px;background:#D4D0C8"></div>
<div class="a" style="left:908px;top:202px;width:1px;height:15px;background:#D4D0C8"></div>
<div class="a" style="left:933px;top:202px;width:1px;height:15px;background:#D4D0C8"></div>
<div class="a" style="left:958px;top:202px;width:1px;height:15px;background:#D4D0C8"></div>
<div class="a" style="left:1013px;top:202px;width:1px;height:15px;background:#D4D0C8"></div>
<div class="a" style="left:1068px;top:202px;width:1px;height:15px;background:#D4D0C8"></div>
<div class="a" style="left:1133px;top:202px;width:1px;height:15px;background:#D4D0C8"></div>
<div class="a" style="left:1188px;top:202px;width:1px;height:15px;background:#D4D0C8"></div>
<div class="a" style="left:1213px;top:202px;width:1px;height:15px;background:#D4D0C8"></div>
<div class="a" style="left:1273px;top:202px;width:1px;height:15px;background:#D4D0C8"></div>
<div class="a" style="left:1348px;top:202px;width:1px;height:15px;background:#D4D0C8"></div>
<div class="t" style="left:217.00px;top:203px;color:#000;letter-spacing:-0.750px">Kissimmee</div>
<div class="t" style="left:292.00px;top:203px;color:#000;letter-spacing:-0.333px">Regal Oaks</div>
<div class="t" style="left:413.00px;top:203px;color:#000;letter-spacing:0.600px">Tow...</div>
<div class="t" style="left:452.00px;top:203px;color:#000;letter-spacing:-0.375px">Room Only</div>
<div class="t" style="left:527.00px;top:203px;color:#000;letter-spacing:0.071px">3 Bedroom To...</div>
<div class="t" style="left:617.00px;top:203px;color:#000;letter-spacing:-0.500px">Mon</div>
<div class="t" style="left:653.00px;top:203px;color:#000;letter-spacing:0.000px">28/08/2017</div>
<div class="t" style="left:720.00px;top:203px;color:#000;letter-spacing:-0.500px">Mon</div>
<div class="t" style="left:755.00px;top:203px;color:#000;letter-spacing:0.111px">18/09/2017</div>
<div class="t" style="left:824.00px;top:203px;color:#000;letter-spacing:-0.111px">Ocean B...</div>
<div class="t" style="left:967.00px;top:203px;color:#000;letter-spacing:0.000px">2,328.70</div>
<div class="t" style="left:1021.00px;top:203px;color:#000;letter-spacing:0.143px">1,164.35</div>
<div class="t" style="left:1087.00px;top:203px;color:#000;letter-spacing:0.000px">2,328.70</div>
<div class="t" style="left:1164.00px;top:203px;color:#000;letter-spacing:0.000px">0.00</div>
<div class="t" style="left:1215.00px;top:203px;color:#000;letter-spacing:-1.000px">XML</div>
<div class="a" style="left:215px;top:217px;width:1133px;height:14px;background:#BBDDFE"></div>
<div class="a" style="left:215px;top:231px;width:1374px;height:1px;background:#D4D0C8"></div>
<div class="a" style="left:290px;top:217px;width:1px;height:15px;background:#D4D0C8"></div>
<div class="a" style="left:410px;top:217px;width:1px;height:15px;background:#D4D0C8"></div>
<div class="a" style="left:450px;top:217px;width:1px;height:15px;background:#D4D0C8"></div>
<div class="a" style="left:525px;top:217px;width:1px;height:15px;background:#D4D0C8"></div>
<div class="a" style="left:615px;top:217px;width:1px;height:15px;background:#D4D0C8"></div>
<div class="a" style="left:650px;top:217px;width:1px;height:15px;background:#D4D0C8"></div>
<div class="a" style="left:718px;top:217px;width:1px;height:15px;background:#D4D0C8"></div>
<div class="a" style="left:753px;top:217px;width:1px;height:15px;background:#D4D0C8"></div>
<div class="a" style="left:821px;top:217px;width:1px;height:15px;background:#D4D0C8"></div>
<div class="a" style="left:883px;top:217px;width:1px;height:15px;background:#D4D0C8"></div>
<div class="a" style="left:908px;top:217px;width:1px;height:15px;background:#D4D0C8"></div>
<div class="a" style="left:933px;top:217px;width:1px;height:15px;background:#D4D0C8"></div>
<div class="a" style="left:958px;top:217px;width:1px;height:15px;background:#D4D0C8"></div>
<div class="a" style="left:1013px;top:217px;width:1px;height:15px;background:#D4D0C8"></div>
<div class="a" style="left:1068px;top:217px;width:1px;height:15px;background:#D4D0C8"></div>
<div class="a" style="left:1133px;top:217px;width:1px;height:15px;background:#D4D0C8"></div>
<div class="a" style="left:1188px;top:217px;width:1px;height:15px;background:#D4D0C8"></div>
<div class="a" style="left:1213px;top:217px;width:1px;height:15px;background:#D4D0C8"></div>
<div class="a" style="left:1273px;top:217px;width:1px;height:15px;background:#D4D0C8"></div>
<div class="a" style="left:1348px;top:217px;width:1px;height:15px;background:#D4D0C8"></div>
<div class="t" style="left:217.00px;top:218px;color:#000;letter-spacing:-0.750px">Kissimmee</div>
<div class="t" style="left:292.00px;top:218px;color:#000;letter-spacing:-0.333px">Regal Oaks</div>
<div class="t" style="left:413.00px;top:218px;color:#000;letter-spacing:0.600px">Tow...</div>
<div class="t" style="left:452.00px;top:218px;color:#000;letter-spacing:-0.375px">Room Only</div>
<div class="t" style="left:528.00px;top:218px;color:#000;letter-spacing:0.000px">4 Bedroom To...</div>
<div class="t" style="left:617.00px;top:218px;color:#000;letter-spacing:-0.500px">Mon</div>
<div class="t" style="left:653.00px;top:218px;color:#000;letter-spacing:0.000px">28/08/2017</div>
<div class="t" style="left:720.00px;top:218px;color:#000;letter-spacing:-0.500px">Mon</div>
<div class="t" style="left:755.00px;top:218px;color:#000;letter-spacing:0.111px">18/09/2017</div>
<div class="t" style="left:824.00px;top:218px;color:#000;letter-spacing:-0.111px">Ocean B...</div>
<div class="t" style="left:967.00px;top:218px;color:#000;letter-spacing:0.000px">2,840.87</div>
<div class="t" style="left:1021.00px;top:218px;color:#000;letter-spacing:0.143px">1,420.44</div>
<div class="t" style="left:1087.00px;top:218px;color:#000;letter-spacing:0.000px">2,840.87</div>
<div class="t" style="left:1164.00px;top:218px;color:#000;letter-spacing:0.000px">0.00</div>
<div class="t" style="left:1215.00px;top:218px;color:#000;letter-spacing:-1.000px">XML</div>
<div class="a" style="left:215px;top:232px;width:1133px;height:14px;background:#BBDDFE"></div>
<div class="a" style="left:215px;top:246px;width:1374px;height:1px;background:#D4D0C8"></div>
<div class="a" style="left:290px;top:232px;width:1px;height:15px;background:#D4D0C8"></div>
<div class="a" style="left:410px;top:232px;width:1px;height:15px;background:#D4D0C8"></div>
<div class="a" style="left:450px;top:232px;width:1px;height:15px;background:#D4D0C8"></div>
<div class="a" style="left:525px;top:232px;width:1px;height:15px;background:#D4D0C8"></div>
<div class="a" style="left:615px;top:232px;width:1px;height:15px;background:#D4D0C8"></div>
<div class="a" style="left:650px;top:232px;width:1px;height:15px;background:#D4D0C8"></div>
<div class="a" style="left:718px;top:232px;width:1px;height:15px;background:#D4D0C8"></div>
<div class="a" style="left:753px;top:232px;width:1px;height:15px;background:#D4D0C8"></div>
<div class="a" style="left:821px;top:232px;width:1px;height:15px;background:#D4D0C8"></div>
<div class="a" style="left:883px;top:232px;width:1px;height:15px;background:#D4D0C8"></div>
<div class="a" style="left:908px;top:232px;width:1px;height:15px;background:#D4D0C8"></div>
<div class="a" style="left:933px;top:232px;width:1px;height:15px;background:#D4D0C8"></div>
<div class="a" style="left:958px;top:232px;width:1px;height:15px;background:#D4D0C8"></div>
<div class="a" style="left:1013px;top:232px;width:1px;height:15px;background:#D4D0C8"></div>
<div class="a" style="left:1068px;top:232px;width:1px;height:15px;background:#D4D0C8"></div>
<div class="a" style="left:1133px;top:232px;width:1px;height:15px;background:#D4D0C8"></div>
<div class="a" style="left:1188px;top:232px;width:1px;height:15px;background:#D4D0C8"></div>
<div class="a" style="left:1213px;top:232px;width:1px;height:15px;background:#D4D0C8"></div>
<div class="a" style="left:1273px;top:232px;width:1px;height:15px;background:#D4D0C8"></div>
<div class="a" style="left:1348px;top:232px;width:1px;height:15px;background:#D4D0C8"></div>
<div class="t" style="left:218.00px;top:233px;color:#000;letter-spacing:0.000px">Orlando Pri...</div>
<div class="t" style="left:292.00px;top:233px;color:#000;letter-spacing:-0.091px">Regal Palms Resort a...</div>
<div class="t" style="left:412.00px;top:233px;color:#000;letter-spacing:0.500px">3.0</div>
<div class="t" style="left:452.00px;top:233px;color:#000;letter-spacing:-0.083px">Self Catering</div>
<div class="t" style="left:528.00px;top:233px;color:#000;letter-spacing:0.071px">Townhome Thr...</div>
<div class="t" style="left:617.00px;top:233px;color:#000;letter-spacing:-0.500px">Mon</div>
<div class="t" style="left:653.00px;top:233px;color:#000;letter-spacing:0.000px">28/08/2017</div>
<div class="t" style="left:720.00px;top:233px;color:#000;letter-spacing:-0.500px">Mon</div>
<div class="t" style="left:755.00px;top:233px;color:#000;letter-spacing:0.111px">18/09/2017</div>
<div class="t" style="left:824.00px;top:233px;color:#000;letter-spacing:-0.250px">Get A Bed</div>
<div class="t" style="left:967.00px;top:233px;color:#000;letter-spacing:0.000px">2,997.50</div>
<div class="t" style="left:1021.00px;top:233px;color:#000;letter-spacing:0.143px">1,498.75</div>
<div class="t" style="left:1087.00px;top:233px;color:#000;letter-spacing:0.000px">2,997.50</div>
<div class="t" style="left:1164.00px;top:233px;color:#000;letter-spacing:0.000px">0.00</div>
<div class="t" style="left:1215.00px;top:233px;color:#000;letter-spacing:-1.000px">XML</div>
<div class="a" style="left:215px;top:247px;width:1133px;height:14px;background:#BBDDFE"></div>
<div class="a" style="left:215px;top:261px;width:1374px;height:1px;background:#D4D0C8"></div>
<div class="a" style="left:290px;top:247px;width:1px;height:15px;background:#D4D0C8"></div>
<div class="a" style="left:410px;top:247px;width:1px;height:15px;background:#D4D0C8"></div>
<div class="a" style="left:450px;top:247px;width:1px;height:15px;background:#D4D0C8"></div>
<div class="a" style="left:525px;top:247px;width:1px;height:15px;background:#D4D0C8"></div>
<div class="a" style="left:615px;top:247px;width:1px;height:15px;background:#D4D0C8"></div>
<div class="a" style="left:650px;top:247px;width:1px;height:15px;background:#D4D0C8"></div>
<div class="a" style="left:718px;top:247px;width:1px;height:15px;background:#D4D0C8"></div>
<div class="a" style="left:753px;top:247px;width:1px;height:15px;background:#D4D0C8"></div>
<div class="a" style="left:821px;top:247px;width:1px;height:15px;background:#D4D0C8"></div>
<div class="a" style="left:883px;top:247px;width:1px;height:15px;background:#D4D0C8"></div>
<div class="a" style="left:908px;top:247px;width:1px;height:15px;background:#D4D0C8"></div>
<div class="a" style="left:933px;top:247px;width:1px;height:15px;background:#D4D0C8"></div>
<div class="a" style="left:958px;top:247px;width:1px;height:15px;background:#D4D0C8"></div>
<div class="a" style="left:1013px;top:247px;width:1px;height:15px;background:#D4D0C8"></div>
<div class="a" style="left:1068px;top:247px;width:1px;height:15px;background:#D4D0C8"></div>
<div class="a" style="left:1133px;top:247px;width:1px;height:15px;background:#D4D0C8"></div>
<div class="a" style="left:1188px;top:247px;width:1px;height:15px;background:#D4D0C8"></div>
<div class="a" style="left:1213px;top:247px;width:1px;height:15px;background:#D4D0C8"></div>
<div class="a" style="left:1273px;top:247px;width:1px;height:15px;background:#D4D0C8"></div>
<div class="a" style="left:1348px;top:247px;width:1px;height:15px;background:#D4D0C8"></div>
<div class="t" style="left:218.00px;top:248px;color:#000;letter-spacing:0.000px">Orlando Pri...</div>
<div class="t" style="left:292.00px;top:248px;color:#000;letter-spacing:-0.091px">Regal Palms Resort a...</div>
<div class="t" style="left:412.00px;top:248px;color:#000;letter-spacing:0.500px">3.0</div>
<div class="t" style="left:452.00px;top:248px;color:#000;letter-spacing:-0.083px">Self Catering</div>
<div class="t" style="left:528.00px;top:248px;color:#000;letter-spacing:-0.077px">Townhome Fo...</div>
<div class="t" style="left:617.00px;top:248px;color:#000;letter-spacing:-0.500px">Mon</div>
<div class="t" style="left:653.00px;top:248px;color:#000;letter-spacing:0.000px">28/08/2017</div>
<div class="t" style="left:720.00px;top:248px;color:#000;letter-spacing:-0.500px">Mon</div>
<div class="t" style="left:755.00px;top:248px;color:#000;letter-spacing:0.111px">18/09/2017</div>
<div class="t" style="left:824.00px;top:248px;color:#000;letter-spacing:-0.250px">Get A Bed</div>
<div class="t" style="left:966.00px;top:248px;color:#000;letter-spacing:0.286px">3,274.31</div>
<div class="t" style="left:1021.00px;top:248px;color:#000;letter-spacing:0.143px">1,637.16</div>
<div class="t" style="left:1086.00px;top:248px;color:#000;letter-spacing:0.286px">3,274.31</div>
<div class="t" style="left:1164.00px;top:248px;color:#000;letter-spacing:0.000px">0.00</div>
<div class="t" style="left:1215.00px;top:248px;color:#000;letter-spacing:-1.000px">XML</div>
<div class="t" style="left:217.00px;top:783px;;letter-spacing:0.040px">First portion: 7.0 sec, total search time: 30.7 sec</div>
<div class="a" style="left:462px;top:780px;width:162px;height:18px;border-top:1px solid #808080;border-left:1px solid #808080;border-right:1px solid #fff;border-bottom:1px solid #fff"></div>
<div class="a" style="left:485px;top:782px;width:39px;height:14px;background:#0A246A"></div>
<div class="a" style="left:1560px;top:778px;width:23px;height:22px;background:#D4D0C8;border-top:1px solid #fff;border-left:1px solid #fff;border-right:1px solid #404040;border-bottom:1px solid #404040;box-shadow:inset -1px -1px 0 #808080"></div>
<div class="t" style="left:1569px;top:780px;font-family:'Liberation Serif';font-weight:bold;font-size:17px;color:#0050A8;letter-spacing:0;line-height:18px">i</div>
<div class="a" style="left:211px;top:805px;width:1382px;height:1px;background:#808080"></div>
<div class="a" style="left:211px;top:806px;width:1382px;height:1px;background:#fff;opacity:0.0"></div>
<div class="a" style="left:263px;top:806px;width:1px;height:17px;background:#808080"></div>
<div class="a" style="left:304px;top:805px;width:66px;height:18px;background:#118A11;border-bottom-left-radius:3px;border-bottom-right-radius:3px"></div>
<div class="a" style="left:466px;top:806px;width:1px;height:17px;background:#808080"></div>
<div class="t" style="left:214.00px;top:808px;;letter-spacing:-0.500px">Summary</div>
<div class="t" style="left:266.00px;top:808px;;letter-spacing:-0.200px">Search</div>
<div class="t" style="left:308.00px;top:808px;color:#fff;letter-spacing:-0.556px">Acc 2A MCO</div>
<div class="t" style="left:374.00px;top:808px;;letter-spacing:-0.375px">Financial Summary</div>
<div class="a" style="left:0px;top:825px;width:1600px;height:1px;background:#808080"></div>
<div class="a" style="left:0px;top:826px;width:1600px;height:1px;background:#fff"></div>
<div class="t" style="left:806.00px;top:832px;;letter-spacing:-0.190px">User: 446 - Clark Silk</div>
<div class="t" style="left:916.00px;top:832px;;letter-spacing:-0.083px">Retailer: 'Ocean-Florida'</div>
<div class="t" style="left:1042.00px;top:832px;;letter-spacing:0.000px">Client: none</div>
<div class="t" style="left:1540.00px;top:832px;;letter-spacing:-0.500px">14:59 GMT</div>
<div class="a" style="left:0px;top:858px;width:1600px;height:1px;background:#E8E8E8"></div>
<div class="a" style="left:0px;top:859px;width:1600px;height:1px;background:#404040"></div>
</body></html>
